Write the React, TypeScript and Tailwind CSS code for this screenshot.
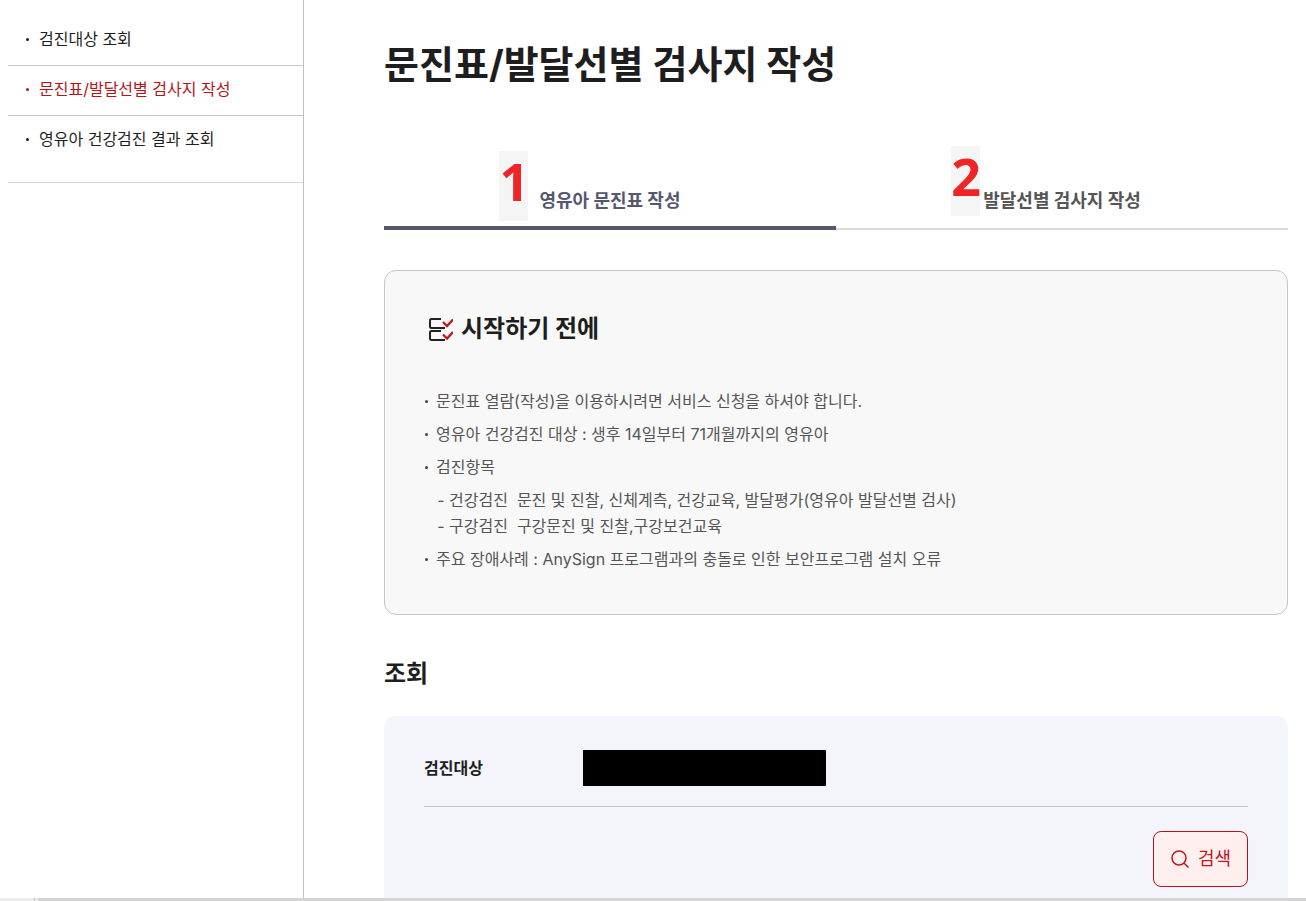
import { useState } from 'react';

const menuItems = ['검진대상 조회', '문진표/발달선별 검사지 작성', '영유아 건강검진 결과 조회'];

const tabs = ['영유아 문진표 작성', '발달선별 검사지 작성'];

const examItems = [
    '건강검진\u00a0 문진 및 진찰, 신체계측, 건강교육, 발달평가(영유아 발달선별 검사)',
    '구강검진\u00a0 구강문진 및 진찰,구강보건교육',
];

interface NoticeProps {
    children: React.ReactNode;
}

function Notice({ children }: NoticeProps) {
    return (
        <p className="flex items-center gap-2">
            <span className="w-[3px] h-[3px] rounded-full bg-[#444444] shrink-0" />
            {children}
        </p>
    );
}

function ChecklistIcon() {
    return (
        <svg className="w-6 h-6 shrink-0" viewBox="0 0 24 24" fill="none" strokeWidth={2}>
            <path stroke="#222222" d="M12 2H2.500a1.500 1.500 0 0 0-1.500 1.500V9.500A1.500 1.500 0 0 0 2.500 11H16" />
            <path stroke="#222222" d="M12 14H2.500a1.500 1.500 0 0 0-1.500 1.500V21.500A1.500 1.500 0 0 0 2.500 23H16" />
            <path stroke="#c4161c" strokeWidth={2.300} d="M14 5l4 4L24 2.500M14 17.500l4 4L24 15" />
        </svg>
    );
}

export default function App() {
    const [activeMenu, setActiveMenu] = useState(1);
    const [activeTab, setActiveTab] = useState(0);

    return (
        <div className="h-screen flex flex-col overflow-hidden bg-white text-[#1e1e1e] font-['Inter','Noto_Sans_CJK_KR',sans-serif]">
            <div className="flex flex-1 min-h-0">
                <aside className="w-[304px] shrink-0 pl-2 pt-4 border-r border-[#c0c0c0]">
                    <ul className="pb-[17px] border-b border-[#d8d8d8]">
                        {menuItems.map((item, i) => (
                            <li key={item} className="border-b border-[#c6c6c6] last:border-b-0">
                                <a
                                    href="#"
                                    onClick={() => setActiveMenu(i)}
                                    className={`flex items-center gap-2.5 h-[49px] pb-[3px] pl-[18px] text-base ${activeMenu === i ? 'text-[#b5121b]' : ''}`}
                                >
                                    <span className="w-[3px] h-[3px] rounded-full bg-current shrink-0" />
                                    {item}
                                </a>
                            </li>
                        ))}
                    </ul>
                </aside>

                <main className="flex-1 min-w-0 overflow-hidden pl-20 pr-[18px] pt-9">
                    <h1 className="text-[38px] leading-[56px] font-bold">문진표/발달선별 검사지 작성</h1>

                    <div role="tablist" className="flex mt-[78px]">
                        {tabs.map((tab, i) => (
                            <button
                                key={tab}
                                role="tab"
                                aria-selected={activeTab === i}
                                onClick={() => setActiveTab(i)}
                                className={`flex-1 h-[60px] text-lg font-bold flex justify-center items-center ${activeTab === i
                                    ? 'pt-1.5 border-b-4 border-[#55586f] text-[#55586f]'
                                    : 'pt-1 border-b-2 border-[#d8d8d8] text-[#555555]'
                                    }`}
                            >
                                <span className="relative">
                                    {tab}
                                    {i === 0 ? (
                                        <span className="absolute right-full bottom-[-6px] mr-[11px] w-[29px] h-[70px] bg-[#f5f5f5] text-[#f02424] text-[52px] leading-[60px] font-['Open_Sans',sans-serif]">1</span>
                                    ) : (
                                        <span className="absolute right-full bottom-[-1px] mr-[3px] w-[29px] h-[70px] bg-[#f5f5f5] text-[#f02424] text-[52px] leading-[60px] font-['Open_Sans',sans-serif]">2</span>
                                    )}
                                </span>
                            </button>
                        ))}
                    </div>

                    <section className="mt-10 px-10 pt-10 pb-[42px] rounded-xl border border-[#c6c6c6] bg-[#f8f8f8]">
                        <h2 className="flex items-center gap-2 pl-1 text-2xl leading-9 font-bold">
                            <ChecklistIcon />
                            시작하기 전에
                        </h2>
                        <div className="flex flex-col gap-[7px] mt-[41px] leading-[26px] text-[#555555]">
                            <Notice>문진표 열람(작성)을 이용하시려면 서비스 신청을 하셔야 합니다.</Notice>
                            <Notice>영유아 건강검진 대상 : 생후 14일부터 71개월까지의 영유아</Notice>
                            <Notice>검진항목</Notice>
                            <ul className="pl-3">
                                {examItems.map((item) => (
                                    <li key={item} className="flex items-center gap-1">
                                        <span className="w-2 text-center">-</span>
                                        {item}
                                    </li>
                                ))}
                            </ul>
                            <Notice>주요 장애사례 : AnySign 프로그램과의 충돌로 인한 보안프로그램 설치 오류</Notice>
                        </div>
                    </section>

                    <h2 className="mt-[41px] text-2xl leading-9 font-bold">조회</h2>
                    <form className="mt-6 px-10 pt-[34px] pb-10 rounded-xl bg-[#f3f5fb]" onSubmit={(e) => e.preventDefault()}>
                        <div className="flex items-center pb-5 border-b border-[#c2c4cb]">
                            <span className="w-[159px] font-bold">검진대상</span>
                            <span className="w-[243px] h-9 bg-black" />
                        </div>
                        <div className="flex justify-end mt-6">
                            <button
                                type="submit"
                                className="flex items-center justify-center gap-2 w-[95px] h-14 rounded-lg border border-[#b5121b] bg-[#ffefef] text-[#c4161c] text-lg"
                            >
                                <svg className="w-5 h-5" viewBox="0 0 20 20" fill="none" stroke="currentColor" strokeWidth={1.500}>
                                    <circle cx="9" cy="9" r="7" />
                                    <path d="M14 14l4.500 4.500" />
                                </svg>
                                검색
                            </button>
                        </div>
                    </form>
                </main>
            </div>
            <div className="flex h-[3px] shrink-0 bg-[#ececec]">
                <div className="ml-[34px] w-px bg-[#bdbdbd]" />
                <div className="ml-[3px] flex-1 bg-[#d4d4d4]" />
            </div>
        </div>
    );
}
